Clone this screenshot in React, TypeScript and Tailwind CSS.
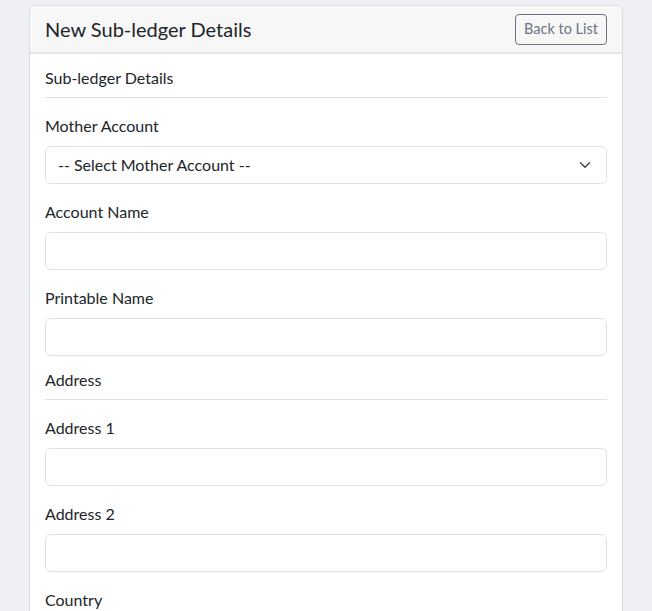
import React from "react";

const font = { fontFamily: 'Lato, "Open Sans", sans-serif' };

function Label({ children }: { children: React.ReactNode }) {
  return <div className="text-[16px] leading-[24px] text-[#212529] mb-2">{children}</div>;
}

function Input({ last }: { last?: boolean }) {
  return (
    <div className={last ? "" : "mb-4"}>
      <input className="block w-full h-[38px] rounded-[6px] border border-[#dee2e6] bg-white px-3 text-[16px] outline-none" />
    </div>
  );
}

function Section({ title }: { title: string }) {
  return (
    <div className="mb-4">
      <div className="pt-[12px] pb-[7px] border-b border-[#dee2e6] text-[16px] leading-[24px] text-[#212529]">
        {title}
      </div>
    </div>
  );
}

export default function App() {
  return (
    <div className="h-[611px] bg-[#eef0f4] px-[29px] pt-[5px] overflow-hidden" style={font}>
      <div className="rounded-[6px] border border-[#dcdde2] bg-white overflow-hidden h-[620px]">
        <div className="flex items-center justify-between bg-[#f7f7f8] border-b-2 border-[#e3e4e8] h-[48px] pl-[15px] pr-[15px]">
          <div className="text-[20px] text-[#212529] leading-[28px]">New Sub-ledger Details</div>
          <button className="h-[31px] px-[8px] rounded-[4px] border border-[#6c757d] text-[14.5px] text-[#6c757d] bg-transparent">
            Back to List
          </button>
        </div>
        <div className="px-[15px]">
          <Section title="Sub-ledger Details" />
          <Label>Mother Account</Label>
          <div className="mb-4 relative">
            <div className="flex items-center h-[38px] rounded-[6px] border border-[#dee2e6] bg-white pl-3 text-[16px] text-[#212529]">
              -- Select Mother Account --
            </div>
            <svg className="absolute right-[15px] top-[13px]" width="14" height="12" viewBox="0 0 16 16" fill="none">
              <path d="M2 5l6 6 6-6" stroke="#343a40" strokeWidth="1.6" strokeLinecap="round" strokeLinejoin="round" />
            </svg>
          </div>
          <Label>Account Name</Label>
          <Input />
          <Label>Printable Name</Label>
          <Input last />
          <Section title="Address" />
          <Label>Address 1</Label>
          <Input />
          <Label>Address 2</Label>
          <Input />
          <Label>Country</Label>
        </div>
      </div>
    </div>
  );
}
